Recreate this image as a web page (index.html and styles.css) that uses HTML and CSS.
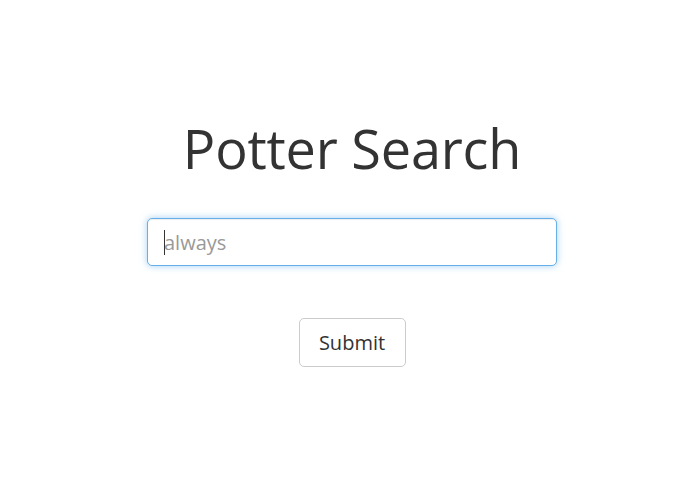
FILE: index.html
```html
<!DOCTYPE html>
<html>
<head>
<meta charset="utf-8">
<title>Potter Search</title>
<link rel="stylesheet" href="styles.css">
</head>
<body>
<main class="search">
  <h1 class="title">Potter Search</h1>
  <form class="form">
    <div class="field">
      <input class="input" type="text" placeholder="always">
      <span class="caret"></span>
    </div>
    <button class="submit" type="button">Submit</button>
  </form>
</main>
</body>
</html>
```
FILE: styles.css
```css
html, body {
  margin: 0;
  padding: 0;
  background: #ffffff;
}
body {
  font-family: "Open Sans", "DejaVu Sans", sans-serif;
  color: #333333;
}
.search {
  width: 410px;
  margin: 0 0 0 147px;
  padding-top: 118px;
  display: flex;
  flex-direction: column;
  align-items: center;
}
.title {
  margin: 0;
  font-size: 54px;
  line-height: 60px;
  font-weight: 400;
  color: #333333;
  letter-spacing: -0.2px;
}
.form {
  width: 100%;
  margin-top: 40px;
  display: flex;
  flex-direction: column;
  align-items: center;
}
.field {
  position: relative;
  width: 100%;
}
.input {
  display: block;
  box-sizing: border-box;
  width: 100%;
  height: 48px;
  margin: 0;
  padding: 0 16px;
  border: 1px solid #66afe9;
  border-radius: 5px;
  outline: none;
  background: #ffffff;
  font-family: "Open Sans", "DejaVu Sans", sans-serif;
  font-size: 20px;
  color: #555555;
  box-shadow: inset 0 1px 1px rgba(0,0,0,0.075), 0 0 7px rgba(102,175,233,0.6);
}
.input::placeholder {
  color: #999999;
}
.caret {
  position: absolute;
  left: 17px;
  top: 12px;
  width: 1px;
  height: 25px;
  background: #333333;
}
.submit {
  margin-top: 52px;
  box-sizing: border-box;
  width: 107px;
  height: 49px;
  padding: 0;
  border: 1px solid #cccccc;
  border-radius: 5px;
  background: #ffffff;
  font-family: "Open Sans", "DejaVu Sans", sans-serif;
  font-size: 20px;
  color: #333333;
  cursor: pointer;
}
```
